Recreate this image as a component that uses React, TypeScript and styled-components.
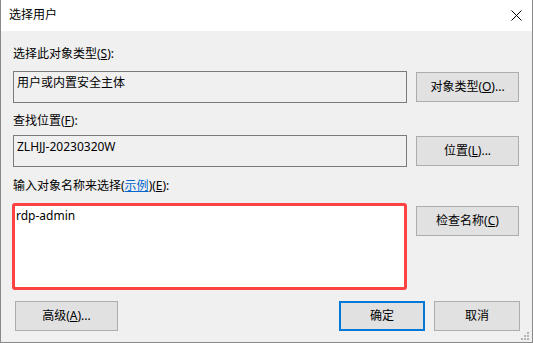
import React from "react";
import styled, { createGlobalStyle } from "styled-components";

const Global = createGlobalStyle`
  html, body { margin: 0; padding: 0; background: #f0f0f0; }
  body { font-family: "Noto Sans", "Noto Sans CJK SC", sans-serif; }
`;

const FONT = `"Noto Sans", "Noto Sans CJK SC", sans-serif`;

const Window = styled.div`
  position: relative;
  box-sizing: border-box;
  width: 533px;
  height: 343px;
  border: 1px solid #8a8a8a;
  border-top: none;
  background: #f0f0f0;
  display: flex;
  flex-direction: column;
  font-family: ${FONT};
  font-size: 12px;
  color: #000;
`;

const TitleBar = styled.div`
  height: 31px;
  background: #fff;
  display: flex;
  align-items: center;
  justify-content: space-between;
  padding: 0 10px 0 8px;
  flex-shrink: 0;
`;

const Title = styled.span`
  font-size: 12px;
  line-height: 16px;
  margin-top: -1px;
`;

const CloseIcon = styled.svg`
  width: 11px;
  height: 11px;
  margin-top: -1px;
`;

const Body = styled.div`
  flex: 1;
  display: flex;
  flex-direction: column;
  padding: 15px 12px 0 12px;
`;

const Label = styled.div<{ $mt?: number }>`
  line-height: 16px;
  height: 16px;
  margin-top: ${(p) => p.$mt ?? 0}px;
  white-space: nowrap;
`;

const Row = styled.div<{ $mt: number; $align?: string }>`
  display: flex;
  align-items: ${(p) => p.$align ?? "center"};
  gap: 9px;
  margin-top: ${(p) => p.$mt}px;
`;

const ReadBox = styled.div`
  box-sizing: border-box;
  width: 394px;
  height: 32px;
  border: 1px solid #7a7a7a;
  background: #f0f0f0;
  padding: 3px 3px;
  line-height: 16px;
`;

const NameArea = styled.div`
  box-sizing: border-box;
  width: 395px;
  height: 87px;
  margin-left: -1px;
  border: 3px solid #ff4343;
  border-radius: 3px;
  background: #fff;
  padding: 2px 1px;
  line-height: 16px;
`;

const Button = styled.button<{ $w?: number; $default?: boolean; $mt?: number }>`
  box-sizing: border-box;
  width: ${(p) => p.$w ?? 103}px;
  height: 30px;
  margin-top: ${(p) => p.$mt ?? 0}px;
  background: #e1e1e1;
  border: ${(p) => (p.$default ? "2px solid #0078d7" : "1px solid #adadad")};
  font-family: ${FONT};
  font-size: 12px;
  color: #000;
  padding: 0;
  display: flex;
  align-items: center;
  justify-content: center;
  line-height: 16px;
`;

const BottomRow = styled.div`
  display: flex;
  align-items: center;
  margin-top: 11px;
  padding-left: 2px;
`;

const Spacer = styled.div`
  flex: 1;
`;

const ButtonGroup = styled.div`
  display: flex;
  gap: 9px;
`;

const Link = styled.span`
  color: #0066cc;
  text-decoration: underline;
`;

const Grip = styled.svg`
  position: absolute;
  right: 2px;
  bottom: 1px;
  width: 9px;
  height: 9px;
`;

export default function App() {
  return (
    <>
      <Global />
      <Window>
        <TitleBar>
          <Title>选择用户</Title>
          <CloseIcon viewBox="0 0 11 11">
            <path d="M0.5 0.5 L10.5 10.5 M10.5 0.5 L0.5 10.5" stroke="#000" strokeWidth="1" fill="none" />
          </CloseIcon>
        </TitleBar>
        <Body>
          <Label>
            选择此对象类型(<u>S</u>):
          </Label>
          <Row $mt={9}>
            <ReadBox>用户或内置安全主体</ReadBox>
            <Button>
              对象类型(<u>O</u>)...
            </Button>
          </Row>
          <Label $mt={10}>
            查找位置(<u>F</u>):
          </Label>
          <Row $mt={6}>
            <ReadBox>ZLHJJ-20230320W</ReadBox>
            <Button>
              位置(<u>L</u>)...
            </Button>
          </Row>
          <Label $mt={11}>
            输入对象名称来选择(<Link>示例</Link>)(<u>E</u>):
          </Label>
          <Row $mt={9} $align="flex-start">
            <NameArea>rdp-admin</NameArea>
            <Button $mt={3}>
              检查名称(<u>C</u>)
            </Button>
          </Row>
          <BottomRow>
            <Button>
              高级(<u>A</u>)...
            </Button>
            <Spacer />
            <ButtonGroup>
              <Button $w={86} $default>
                确定
              </Button>
              <Button $w={86}>取消</Button>
            </ButtonGroup>
          </BottomRow>
        </Body>
        <Grip viewBox="0 0 9 9">
          <g fill="#b4b4b4">
            <rect x="6" y="0" width="2" height="2" />
            <rect x="3" y="3" width="2" height="2" />
            <rect x="6" y="3" width="2" height="2" />
            <rect x="0" y="6" width="2" height="2" />
            <rect x="3" y="6" width="2" height="2" />
            <rect x="6" y="6" width="2" height="2" />
          </g>
        </Grip>
      </Window>
    </>
  );
}
